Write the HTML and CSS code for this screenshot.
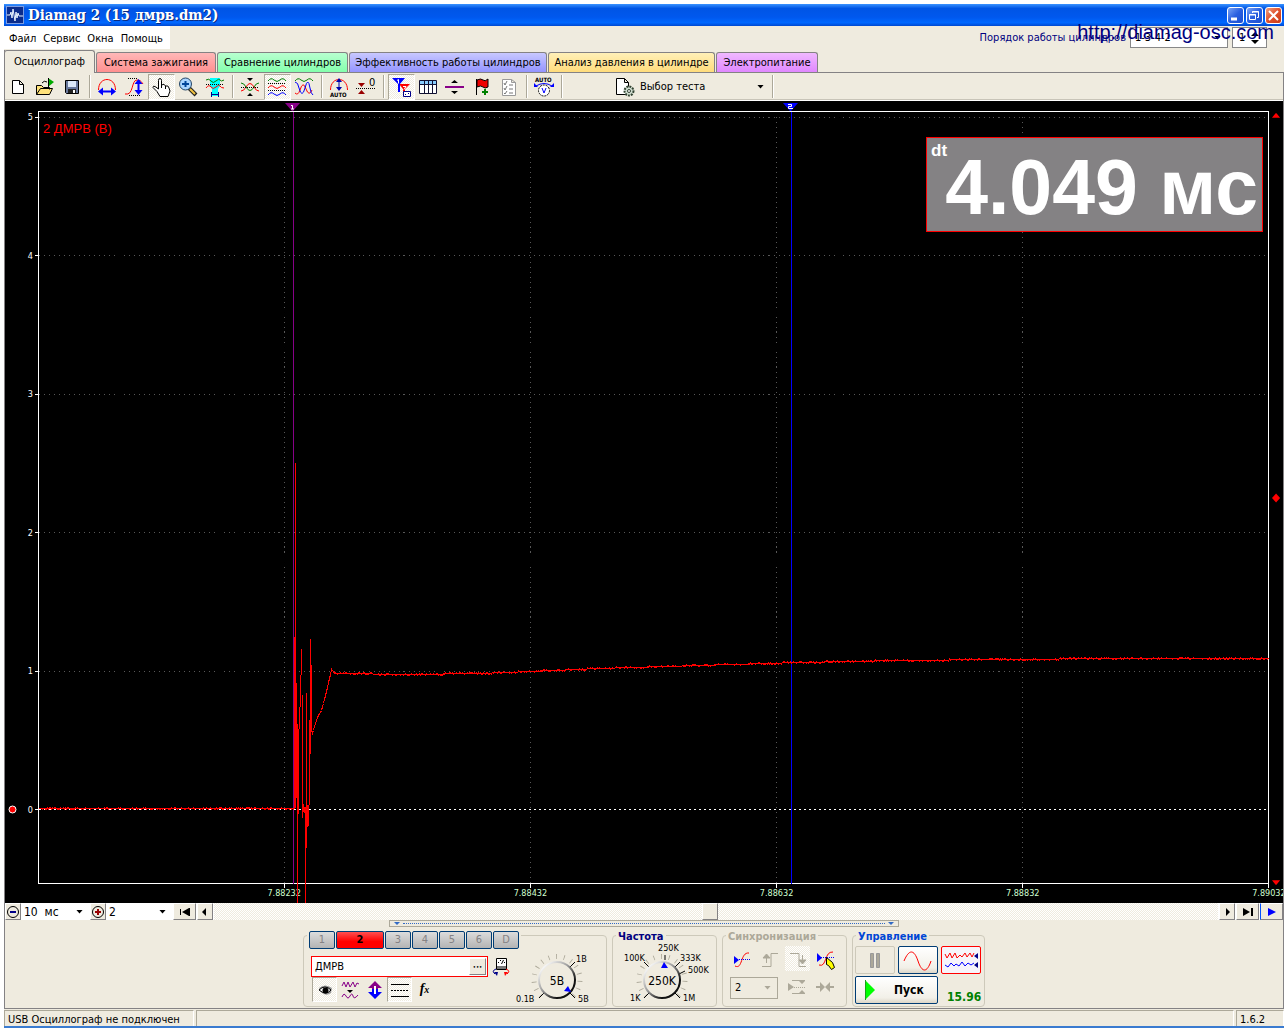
FILE: index.html
```html
<!DOCTYPE html>
<html lang="ru">
<head>
<meta charset="utf-8">
<title>Diamag 2 (15 дмрв.dm2)</title>
<link rel="stylesheet" href="styles.css">
</head>
<body>
<div class="window">
  <header class="titlebar">
    <svg class="logo" viewBox="0 0 18 18"><rect x="0.5" y="0.5" width="17" height="17" fill="#0a2c8c" stroke="#7d9ce0"/><path d="M1 9h3l1-3 1 6 1-9 2 12 1-9 1 6 1-5 1 3h4" fill="none" stroke="#e8f4ff"/></svg>
    <h1>Diamag 2 (15 дмрв.dm2)</h1>
    <button class="win" aria-label="Свернуть"><svg viewBox="0 0 17 17"><path d="M4 12h6" stroke="#fff" stroke-width="3"/></svg></button>
    <button class="win" aria-label="Восстановить"><svg viewBox="0 0 17 17" fill="none" stroke="#fff"><path d="M6.500 6V4.500h6v6H11M6 5h7"/><path d="M3.500 7.500h6v5h-6zM3 8h7"/></svg></button>
    <button class="win close" aria-label="Закрыть"><svg viewBox="0 0 17 17"><path d="M4 4l9 9M13 4l-9 9" stroke="#fff" stroke-width="2"/></svg></button>
  </header>

  <div class="menurow">
    <nav class="menu"><a href="#">Файл</a><a href="#">Сервис</a><a href="#">Окна</a><a href="#">Помощь</a></nav>
    <div class="order">
      <label for="order">Порядок работы цилиндров</label>
      <span class="combo order-list"><select id="order"><option>1-3-4-2</option></select></span>
      <span class="spin"><input type="text" value="1" aria-label="Цилиндр"><svg viewBox="0 0 9 12"><path d="M0 4l4-4 4 4zM0 8l4 4 4-4z"/></svg></span>
    </div>
    <a class="site" href="#">http://diamag-osc.com</a>
  </div>

  <nav class="tabs">
    <button class="tab t1">Осциллограф</button>
    <button class="tab t2">Система зажигания</button>
    <button class="tab t3">Сравнение цилиндров</button>
    <button class="tab t4">Эффективность работы цилиндров</button>
    <button class="tab t5">Анализ давления в цилиндре</button>
    <button class="tab t6">Электропитание</button>
  </nav>

  <main class="page">
    <div class="toolbar">
      <button aria-label="Новый"><svg viewBox="0 0 20 20"><path d="M4.500 3.500h7l4 4v9h-11zM11.500 3.500v4h4" fill="#fff" stroke="#000"/></svg></button>
      <button aria-label="Открыть"><svg viewBox="0 0 20 20"><path d="M1.500 17.500v-9h5l2 2h6v2M1.500 17.500l4-6h12l-3 6z" fill="#ffe27a" stroke="#000"/><path d="M7 6q2-3 5-1" fill="none" stroke="#000"/><path d="M13 1v9l6-5z" fill="#0a0"/><path d="M13.500 1v10" stroke="#000"/></svg></button>
      <button aria-label="Сохранить"><svg viewBox="0 0 20 20"><path d="M3.500 3.500h13v13h-12l-1-1z" fill="#68789c" stroke="#000"/><path d="M6 4h8v6H6z" fill="#dce8f8"/><path d="M6 12h8v4H6z" fill="#222"/><path d="M11 13h2v3h-2z" fill="#fff"/></svg></button>
      <i class="sep"></i>
      <button aria-label="Ширина"><svg viewBox="0 0 20 20" fill="none"><path d="M1.500 13c0-14 17-14 17 0" stroke="red"/><path d="M3 14.500h14" stroke="#00f" stroke-width="2"/><path d="M1 14.500l5-4v8zM19 14.500l-5-4v8z" fill="#00f"/></svg></button>
      <button aria-label="Высота"><svg viewBox="0 0 20 20" fill="none"><path d="M1 17c9 2 6-14 12-14 3 0 4 1 6 4" stroke="red"/><path d="M14.500 4v12" stroke="#00f" stroke-width="2"/><path d="M14.500 2l-4 5h8zM14.500 18l-4-5h8z" fill="#00f"/><path d="M4 1.500h9M5 18.500h12" stroke="#000" stroke-dasharray="1 1"/></svg></button>
      <button class="on" aria-label="Рука"><svg viewBox="0 0 20 20"><path d="M7.500 12V3.500q0-2 1.500-2t1.500 2V8q3-2 4 1 3-1 3.500 2l1 3-2 5.500h-8l-3-5-4-4q0-2 2-1z" fill="#fff" stroke="#000"/><path d="M10.500 8v3M14.500 9v3" stroke="#000"/></svg></button>
      <button aria-label="Лупа"><svg viewBox="0 0 20 20"><path d="M11 11l7 7" stroke="#222" stroke-width="4"/><path d="M12 12l5 5" stroke="#f4c542" stroke-width="2"/><circle cx="7.500" cy="7" r="6" fill="#a9d4ff" stroke="#246"/><path d="M4 7h7M7.500 4v6" stroke="#00449a" stroke-width="2"/></svg></button>
      <button aria-label="Выделение"><svg viewBox="0 0 20 20" fill="none"><path d="M5 1h10v8l-2 3v7H7v-7L5 9z" fill="#0ff"/><path d="M1 3q3-2 5 1t5 0 4-1 4 0" stroke="green"/><path d="M1 7.500h18" stroke="#000" stroke-dasharray="1 1"/><path d="M1 11q3-4 5-1t5 0 4-1 4 2" stroke="red"/><path d="M6 17.500h8M6.500 15v5M13.500 15v5" stroke="#008"/></svg></button>
      <i class="sep"></i>
      <button aria-label="Центрировать"><svg viewBox="0 0 20 20" fill="none"><path d="M1 14q3 0 5-4 4-7 8 0 2 4 5 4" stroke="red"/><path d="M1 6q3 0 5 4 4 7 8 0 2-4 5-4" stroke="green"/><path d="M1 10.500h18" stroke="#000" stroke-dasharray="1 1"/><path d="M7 1h6l-3 3zM7 19h6l-3-3z" fill="#000"/></svg></button>
      <button class="on" aria-label="Раздельно"><svg viewBox="0 0 20 20" fill="none"><path d="M1 4q3-4 6-1t6 0 6 1" stroke="green"/><path d="M1 11q3-4 6-1t6 0 6 1" stroke="red"/><path d="M1 18q3-4 6-1t6 0 6 1" stroke="#00f"/><path d="M1 6.500h18M1 13.500h18" stroke="#000" stroke-dasharray="1 1"/></svg></button>
      <button aria-label="Вместе"><svg viewBox="0 0 20 20" fill="none"><path d="M1 4q3-4 6-1t6 0 6 1" stroke="green"/><path d="M1 16q3 3 5-3 3-10 6-1 3 8 6 1" stroke="red"/><path d="M1 5q3 0 4 6 3 11 6 0 3-12 5 0 1 6 3 7" stroke="#00f"/></svg></button>
      <i class="sep"></i>
      <button aria-label="Авто"><svg viewBox="0 0 20 20" fill="none"><path d="M1.500 13c0-14 17-14 17 0" stroke="red"/><path d="M10 4v8" stroke="#00a"/><path d="M7 5l3-4 3 4zM7 10l3 4 3-4z" fill="#00a"/><text x="1" y="20" class="micro">AUTO</text></svg></button>
      <button aria-label="Ноль"><svg viewBox="0 0 20 20"><path d="M0 11.500h20" stroke="#000" stroke-dasharray="1 1"/><path d="M2 6h7L5.500 10zM2 17h7l-3.500-4z" fill="#900"/><text x="13" y="9" class="zero">0</text></svg></button>
      <i class="sep"></i>
      <button class="on" aria-label="Маркеры"><svg viewBox="0 0 20 20" fill="none"><path d="M8 7h11l-5 5v7h-2v-7z" fill="red"/><path d="M1 1h13L9 7v8H7V7z" fill="#00f"/><path d="M6 3.500l1.500-1v4M12 9.500h3l-2 3" stroke="#fff"/><path d="M12.500 14.500h7v5h-7z" fill="#fff" stroke="#008"/><path d="M14 17.500h1M17 16.500h1" stroke="#008"/></svg></button>
      <button aria-label="Таблица"><svg viewBox="0 0 20 20"><path d="M1.500 3.500h17v13h-17z" fill="#fff" stroke="#113"/><path d="M2 4h16v3H2z" fill="#8cf"/><path d="M2 7.500h16M6.500 4v12M10.500 4v12M14.500 4v12" stroke="#113"/></svg></button>
      <button aria-label="Разделить"><svg viewBox="0 0 20 20"><path d="M0 10h19" stroke="#808" stroke-width="2"/><path d="M6 6h7L9.500 3zM6 14h7l-3.500 3z"/></svg></button>
      <button aria-label="Флаг"><svg viewBox="0 0 20 20"><path d="M4.500 2v16" stroke="#000"/><path d="M5 3q4-2 6 0t5-1v8q-3 2-5 0T5 10z" fill="#e00" stroke="#000"/><path d="M10 15h6M13 12v6" stroke="green" stroke-width="2"/></svg></button>
      <button aria-label="Список"><svg viewBox="0 0 20 20" fill="none"><path d="M3.500 2.500h9l4 3v13h-13zM12.500 2.500v3h4" fill="#fff" stroke="#999"/><path d="M5 6l1 2 2-4M5 11l1 2 2-4M5 16l1 1 2-3M10 8h4M10 12h4M10 16h4" stroke="#777"/></svg></button>
      <i class="sep"></i>
      <button aria-label="Авто вольт"><svg viewBox="0 0 20 20" fill="none"><text x="1" y="5" class="micro">AUTO</text><path d="M2 9q8-5 16 0" stroke="#00f"/><path d="M0 6v4h4zM20 6v4h-4z" fill="#00f"/><circle cx="10" cy="13.500" r="5.500" fill="#fff" stroke="#000" stroke-dasharray="2 1"/><path d="M8 11l2 5 2-5" stroke="#00f"/></svg></button>
      <i class="sep"></i>
      <button class="test"><svg viewBox="0 0 20 20"><path d="M1.500 1.500h8l4 4v12h-12zM9.500 1.500v4h4" fill="#fff" stroke="#000"/><circle cx="14" cy="14" r="4.500" fill="#cfdccf" stroke="#343" stroke-width="2" stroke-dasharray="2 1"/><circle cx="14" cy="14" r="1.500" fill="#fff" stroke="#343"/></svg><span>Выбор теста</span></button>
      <i class="sep"></i>
    </div>

    <section class="scope">
      <div class="yaxis"><span>5</span><span>4</span><span>3</span><span>2</span><span>1</span><span>0</span></div>
      <div class="plot">
        <svg class="graph" viewBox="0 0 1230 772" preserveAspectRatio="none">
          <path class="grid" d="M0 6H1230M0 144H1230M0 283H1230M0 421H1230M0 560H1230M246 5V772M492 5V772M738 5V772M984 5V772"/>
          <path class="ticks" d="M-4 6h4M-4 144h4M-4 283h4M-4 421h4M-4 560h4M-4 698h4M246 772v4M492 772v4M738 772v4M984 772v4M1230 772v4"/>
          <path class="zeroline" d="M0 698H1230"/>
          <path class="cur1" d="M255 0V772"/>
          <path class="cur2" d="M753 0V772"/>
          <path class="trace" id="trace"/>
        </svg>
        <svg class="pin" style="left: 20.7%" viewBox="0 0 15 8"><path d="M0 0h15L8 8H7z" fill="#808"/><path d="M6 2.500h1.500V6M6 6h3" stroke="#fff" fill="none"/></svg>
        <svg class="pin" style="left: 61.2%" viewBox="0 0 15 8"><path d="M0 0h15L8 8H7z" fill="#00f"/><path d="M5 1.500h3.500v2h-3v2H10" stroke="#fff" fill="none"/></svg>
        <span class="channel">2 ДМРВ (В)</span>
        <output class="meter"><small>dt</small>4.049 мс</output>
      </div>
      <svg class="mark" viewBox="0 0 10 10"><path d="M0 7l4-5h1l4 5z"/></svg>
      <svg class="mark mid" viewBox="0 0 10 10"><path d="M0 5l4.500-5L9 5l-4.500 5z"/></svg>
      <svg class="mark low" viewBox="0 0 10 10"><path d="M0 3h9L5 8H4z"/></svg>
      <div class="xaxis"><span>7.88232</span><span>7.88432</span><span>7.88632</span><span>7.88832</span><span>7.89032</span></div>
      <svg class="dot" viewBox="0 0 9 9"><circle cx="4.500" cy="4.500" r="3.500" fill="red" stroke="#fff"/></svg>
    </section>

    <div class="navrow">
      <button class="raised zoomb" aria-label="Меньше"><svg viewBox="0 0 14 14" fill="none"><circle cx="7" cy="7" r="5.500" stroke="#000"/><path d="M4 7h6" stroke="#008" stroke-width="2"/></svg></button>
      <span class="combo scale"><select aria-label="Масштаб времени"><option>10&nbsp; мс</option></select></span>
      <button class="raised zoomb" aria-label="Больше"><svg viewBox="0 0 14 14" fill="none"><circle cx="7" cy="7" r="5.500" stroke="#000"/><path d="M4 7h6M7 4v6" stroke="#900" stroke-width="2"/></svg></button>
      <span class="combo factor"><select aria-label="Множитель"><option>2</option></select></span>
      <button class="raised wide" aria-label="В начало"><svg viewBox="0 0 12 10"><path d="M1 2h1v6H1zM10 1v8L3 5zM10 1h1v8h-1z"/></svg></button>
      <button class="raised step" aria-label="Назад"><svg viewBox="0 0 12 10"><path d="M7 1v8L3 5z"/></svg></button>
      <input type="range" class="scroll" min="0" max="1000" value="494" aria-label="Позиция">
      <button class="raised step" aria-label="Вперёд"><svg viewBox="0 0 12 10"><path d="M5 1v8l4-4z"/></svg></button>
      <button class="raised wide" aria-label="В конец"><svg viewBox="0 0 12 10"><path d="M1 1v8l7-4zM9 1h2v8H9z"/></svg></button>
      <button class="raised wide play" aria-label="Воспроизвести"><svg viewBox="0 0 12 10"><path d="M2 1v8l8-4z" fill="#00f"/></svg></button>
    </div>

    <section class="panel">
      <div class="splitter"><i></i><b></b><i></i></div>
      <div class="groups">
        <fieldset class="g-channel">
          <legend><span class="channels"><button>1</button><button class="active">2</button><button>3</button><button>4</button><button>5</button><button>6</button><button>D</button></span></legend>
          <div class="inner">
            <div class="settings">
              <div class="name"><input type="text" value="ДМРВ" aria-label="Название канала"><button class="raised" aria-label="Выбрать">•••</button></div>
              <div class="tools">
                <button class="on" aria-label="Показать"><svg viewBox="0 0 20 20"><path d="M4 8q6-5 13 0l-1 5q-5 4-10-1z" fill="#999"/><path d="M4 10q6-6 12 0-5 6-12 0z" fill="#fff" stroke="#000"/><circle cx="10.500" cy="10.500" r="3"/></svg></button>
                <button aria-label="Фильтр"><svg viewBox="0 0 20 20" fill="none" stroke="#808"><path d="M2 6l2-4 2 5 2-5 2 5 3-5 2 5 2-4 2 1M2 17q2-5 4-1t4 0 3 0 5-1"/><path d="M7 10h6l-3 3z" fill="#000" stroke="none"/></svg></button>
                <button aria-label="Сдвиг"><svg viewBox="0 0 20 20"><path d="M3 8l7-7 7 7h-4v3H7V8z" fill="#808"/><path d="M3 12l7 7 7-7h-4V9H7v3z" fill="#00f"/><path d="M10 6v8" stroke="#fff" stroke-width="2"/></svg></button>
                <button class="on" aria-label="Линии"><svg viewBox="0 0 20 20"><path d="M1 4.500h18M1 16.500h18" stroke="#000"/><path d="M1 10.500h18" stroke="#000" stroke-dasharray="2 1"/></svg></button>
                <button class="fx" aria-label="Функция">f<small>x</small></button>
              </div>
            </div>
            <button class="probe" aria-label="Датчик"><svg viewBox="0 0 18 20" fill="none"><path d="M4.500 1.500h10v11h-10z" fill="#fff" stroke="#000"/><path d="M5 9h9v3H5z" fill="#777"/><path d="M6 5.500h1M8 3.500h1M12 5.500h1M9.500 7l2-4" stroke="#000"/><path d="M4 12q-5 2-1 5" stroke="#008"/><path d="M2 15h4l-1 4z" fill="#008"/><path d="M14 12q5 2 1 5" stroke="red"/><path d="M12 15h4l-3 4z" fill="red"/></svg></button>
            <svg class="knob" viewBox="0 0 92 64">
              <path class="marks" pathLength="270" d="M27 55A23 23 0 1 1 59 55"/>
              <path d="M56 26l5-5M56 52l5 5M30 52l-5 5" stroke="#000"/>
              <circle cx="43" cy="39" r="18" fill="#efebdf" stroke="url(#rim)" stroke-width="2"/>
              <path d="M57 51l-7-1 4-5z" fill="#00f"/>
              <text x="62" y="21">1В</text><text x="2" y="61">0.1В</text><text x="64" y="61">5В</text><text x="43" y="44" class="val">5В</text>
            </svg>
          </div>
        </fieldset>
        <fieldset class="g-rate">
          <legend>Частота</legend>
          <svg class="knob" viewBox="0 0 102 64">
            <defs><linearGradient id="rim" x1="0" y1="0" x2="1" y2="1"><stop offset="0.100" stop-color="#fff"/><stop offset="0.450" stop-color="#999"/><stop offset="0.750" stop-color="#111"/></linearGradient></defs>
            <path class="marks" pathLength="270" d="M33 57A23 23 0 1 1 65 57"/>
            <path d="M36 28l-5-5M52 21v-5M62 28l5-5M66 35l6-3M62 54l5 5M36 54l-5 5" stroke="#000"/>
            <circle cx="49" cy="41" r="18" fill="#efebdf" stroke="url(#rim)" stroke-width="2"/>
            <path d="M51 23l4 6h-7z" fill="#00f"/>
            <text x="45" y="12">250K</text><text x="11" y="22">100K</text><text x="67" y="22">333K</text><text x="75" y="34">500K</text><text x="17" y="62">1K</text><text x="70" y="62">1M</text><text x="49" y="46" class="val">250K</text>
          </svg>
        </fieldset>
        <fieldset class="g-sync">
          <legend>Синхронизация</legend>
          <div class="tools">
            <button aria-label="Синхронизация"><svg viewBox="0 0 20 20" fill="none"><path d="M3 17c8 4 5-14 14-13" stroke="red"/><path d="M3 10.500h15" stroke="#00f" stroke-dasharray="1 1"/><path d="M2 7v8l5-4z" fill="#00f"/></svg></button>
            <button disabled aria-label="По фронту"><svg viewBox="0 0 20 20" fill="none" stroke="#aca899"><path d="M2 17.500h9V4.500h7M6.500 14V7"/><path d="M3 9l3.500-4L10 9z" fill="#aca899"/></svg></button>
            <button disabled class="check" aria-label="По спаду"><svg viewBox="0 0 20 20" fill="none" stroke="#aca899"><path d="M2 4.500h9v13h7M14.500 6v6"/><path d="M11 11l3.500 4 3.500-4z" fill="#aca899"/></svg></button>
            <button aria-label="Выбор уровня"><svg viewBox="0 0 20 20" fill="none"><path d="M3 16c8 3 5-14 14-13" stroke="red"/><path d="M1 8.500h18" stroke="#00f" stroke-dasharray="1 1"/><path d="M1 4v9l5-4z" fill="#00f"/><path d="M10.500 8.500v7l2 1 3 4 3-2-2-5z" fill="#ff0" stroke="#000"/></svg></button>
          </div>
          <div class="tools">
            <span class="combo sync-ch"><select disabled aria-label="Канал синхронизации"><option>2</option></select></span>
            <button disabled aria-label="Уровень"><svg viewBox="0 0 20 20" fill="#aca899"><path d="M1 5v8l6-4zM5 2h13v1H5zM5 15h13v1H5zM12 3h6l-3 3zM12 15h6l-3-3z"/><path d="M5 9.500h14" stroke="#aca899" stroke-dasharray="1 1"/></svg></button>
            <button disabled aria-label="Сжать"><svg viewBox="0 0 20 20" fill="#aca899"><path d="M1 8h4V4l5 5-5 5v-4H1zM19 8h-4V4l-5 5 5 5v-4h4z"/></svg></button>
          </div>
        </fieldset>
        <fieldset class="g-run">
          <legend>Управление</legend>
          <div class="runs">
            <button class="big" disabled aria-label="Пауза"><svg viewBox="0 0 32 20"><path d="M11.500 3.500h3v14h-3zM17.500 3.500h3v14h-3z" fill="#aca899" stroke="#999"/></svg></button>
            <button class="big xp" aria-label="Один кадр"><svg viewBox="0 0 32 20" fill="none"><path d="M2 11c5-12 10-12 14 0s9 12 13 0" stroke="red"/></svg></button>
            <button class="big xp red" aria-label="Самописец"><svg viewBox="0 0 36 20" fill="none"><path d="M2 4l2 4 3-5 2 5 3-5 2 5 3-3 2 2 3-4 2 4 3-4 2 4 2-4" stroke="red"/><path d="M2 15l3 2 3-4 3 3 2-2 3 2 3-4 3 4 3-3 3 2 3-2" stroke="#00f"/><path d="M35 3v6l-4-3zM35 12v6l-4-3z" fill="#008"/></svg></button>
            <button class="start xp"><svg viewBox="0 0 10 20"><path d="M0 0v20l10-10z" fill="#0f0"/><path d="M0.500 0v20" stroke="#1a9f1a"/></svg><span>Пуск</span></button>
            <output>15.96</output>
          </div>
        </fieldset>
      </div>
    </section>
  </main>

  <footer class="status"><span class="s1">USB Осциллограф не подключен</span><span class="s2"></span><span class="s3">1.6.2</span></footer>
</div>
<script src="script.js"></script>
</body>
</html>
```
FILE: script.js
```js
// Signal trace: coordinates are in the 1230 x 772 space of the graph.
const bursts = [
  [256, 525, 697], [257, 351, 696], [258, 571, 686], [259, 612, 792],
  [260, 617, 702], [261, 595, 617], [262, 563, 595], [263, 537, 563],
  [264, 583, 706], [265, 692, 700], [266, 695, 701], [267, 695, 791],
  [268, 581, 736], [269, 693, 715], [270, 693, 714], [271, 608, 693],
  [272, 527, 642], [273, 553, 618]
];
const curve = [
  [274, 622], [276, 615], [279, 606], [281, 602], [283, 599], [287, 584],
  [291, 567], [293, 558], [296, 561], [300, 562], [370, 563], [440, 562],
  [492, 560], [560, 557], [660, 554], [760, 551], [860, 549], [960, 548],
  [1080, 547], [1230, 547]
];
let seed = 7;
function random() {
  seed = (seed * 1103515245 + 12345) % 2147483648;
  return seed / 2147483648;
}
function level(x) {
  for (let i = 1; i < curve.length; i++) {
    const [x0, y0] = curve[i - 1], [x1, y1] = curve[i];
    if (x <= x1) return y0 + (y1 - y0) * (x - x0) / (x1 - x0);
  }
  return 547;
}
let line = 'M0 697';
let noise = '';
// One sample column: the line itself and, often, a pixel of noise beside it.
function sample(x, y) {
  const r = random();
  line += `L${x} ${y}`;
  if (r < 0.22) noise += `M${x - 1} ${y - 1}h1`;
  if (r > 0.72) noise += `M${x - 1} ${y + 1}h1`;
}
for (let x = 1; x < 256; x++) sample(x, 697);
for (const [x, top, bottom] of bursts) line += `M${x} ${top}V${bottom}`;
line += 'M273 618';
for (let x = 274; x <= 1230; x++) sample(x, Math.round(level(x)));
document.getElementById('trace').setAttribute('d', line + noise);
```
FILE: styles.css
```css
* { box-sizing: border-box; }
body {
  margin: 0;
  padding: 4px;
  min-height: 100vh;
  display: flex;
  background: #fff;
  color: #000;
  font: 11px/12px "DejaVu Sans Condensed", "DejaVu Sans", sans-serif;
}
button, input, select { font: inherit; color: inherit; margin: 0; padding: 0; border: 0; border-radius: 0; background: none; }
a { color: inherit; text-decoration: none; }
svg { display: block; overflow: visible; }
.window { flex: 1; min-width: 0; display: flex; flex-direction: column; background: #efebdf; border-bottom: 2px solid #3a7bd0; }

/* Title bar */
.titlebar { height: 22px; display: flex; align-items: center; gap: 2px; padding: 0 2px; background: linear-gradient(#3a93ff, #0055e5 20%, #0058ee 60%, #0068ff 85%, #0048d0); color: #fff; }
.logo { width: 18px; height: 18px; }
.titlebar h1 { flex: 1; margin: 0; padding-left: 2px; font: bold 15px/20px "DejaVu Serif Condensed", "DejaVu Serif", serif; text-shadow: 1px 1px #0a2a80; }
.win { width: 17px; height: 17px; border: 1px solid #fff; border-radius: 3px; background: linear-gradient(135deg, #7ba4f5, #2a5fe0 50%, #1e4fd0); }
.win svg { width: 17px; height: 17px; margin: -1px; }
.win.close { background: linear-gradient(135deg, #f0a080, #e0512c 50%, #c83a14); }

/* Menu */
.menurow { position: relative; height: 24px; display: flex; justify-content: space-between; align-items: flex-start; }
.menu { height: 23px; display: flex; align-items: center; gap: 7px; padding: 2px 7px 0 5px; background: #fff; }
.order { display: flex; align-items: center; gap: 4px; padding: 1px 17px 0 0; color: #000080; }
.combo { display: inline-flex; position: relative; background: #fff; color: #000; }
.combo::after { content: ""; position: absolute; right: 6px; top: 50%; width: 7px; height: 4px; margin-top: -2px; background: currentColor; clip-path: polygon(0 0, 100% 0, 50% 100%); pointer-events: none; }
.combo select { appearance: none; width: 100%; padding: 0 4px; outline: 0; }
.order-list { width: 98px; height: 21px; border: 1px solid #888; }
.spin { width: 35px; height: 21px; display: flex; align-items: center; padding: 0 6px; background: #fff; border: 1px solid #888; color: #000; }
.spin input { flex: 1; min-width: 0; }
.spin svg { width: 9px; height: 12px; }
.site { position: absolute; right: 10px; top: -5px; color: #000080; font: 20px/22px "Liberation Sans", Arial, sans-serif; }

/* Tabs */
.tabs { height: 22px; display: flex; align-items: flex-end; gap: 1px; border-left: 1px solid #848284; }
.tab { height: 20px; border: 1px solid #848284; border-bottom: 0; border-radius: 3px 3px 0 0; white-space: nowrap; }
.t1 { width: 91px; height: 23px; margin: 0 0 -1px -1px; background: #efebdf; z-index: 1; }
.t2 { width: 120px; background: linear-gradient(#ffb8b8, #ff9090); }
.t3 { width: 131px; background: linear-gradient(#b8ffd0, #84ffac); }
.t4 { width: 198px; background: linear-gradient(#c8c8ff, #9494ff); }
.t5 { width: 167px; background: linear-gradient(#fff0b8, #ffdc7c); }
.t6 { width: 102px; background: linear-gradient(#f0b8ff, #e088ff); }

.page { flex: 1; display: flex; flex-direction: column; border: 1px solid #848284; }

/* Toolbar */
.toolbar { height: 28px; display: flex; align-items: center; border-bottom: 1px solid #fff; box-shadow: inset 0 -1px #c8c4b8; }
.toolbar button { width: 27px; height: 26px; display: grid; place-items: center; padding-right: 2px; }
.toolbar svg { width: 20px; height: 20px; }
.on, .check { background: repeating-conic-gradient(#fff 0 25%, #efebdf 0 50%) 0 0 / 2px 2px; }
.on, .toolbar .on { border: 1px solid #fff; border-top-color: #aca899; border-left-color: #aca899; }
.sep { width: 2px; height: 23px; margin: 0 3px; border-left: 1px solid #aca899; border-right: 1px solid #fff; }
.micro { font: bold 6px "DejaVu Sans Condensed", sans-serif; fill: #000; }
.zero { font: 11px "DejaVu Sans Condensed", sans-serif; }
.toolbar .test { width: 156px; display: flex; align-items: center; gap: 5px; margin-left: 47px; padding: 0 2px; }
.test::after { content: ""; margin-left: auto; margin-right: 3px; width: 7px; height: 4px; background: #000; clip-path: polygon(0 0, 100% 0, 50% 100%); }

/* Oscilloscope */
.scope { flex: 1; display: grid; grid-template: 10px minmax(0, 1fr) 19px / 33px minmax(0, 1fr) 14px; background: #000; overflow: hidden; }
.yaxis { grid-area: 2 / 1; display: flex; flex-direction: column; justify-content: space-between; align-items: flex-end; padding: 0 5px 68px 0; color: #fff; font-size: 9px; }
.plot { grid-area: 2 / 2; position: relative; border: 1px solid #fff; }
.graph { position: absolute; left: -1px; top: -1px; width: calc(100% + 1px); height: calc(100% + 1px); fill: none; shape-rendering: crispEdges; }
.graph path { vector-effect: non-scaling-stroke; transform: translate(0.5px, 0.5px); }
.grid { stroke: #585858; stroke-dasharray: 1 4; }
.ticks { stroke: #fff; }
.zeroline { stroke: #fff; stroke-dasharray: 2 3; }
.cur1 { stroke: #808; }
.cur2 { stroke: #00f; }
.trace { stroke: red; }
.pin { position: absolute; top: -9px; width: 15px; height: 8px; margin-left: -8px; }
.channel { position: absolute; left: 4px; top: 9px; color: red; font: 13px/15px "Liberation Sans", Arial, sans-serif; }
.meter { position: absolute; right: 5px; top: 25px; width: 337px; height: 95px; padding-right: 4px; border: 1px solid red; background: #848284; color: #fff; text-align: right; white-space: nowrap; font: bold 77px/98px "Liberation Sans", Arial, sans-serif; }
.meter small { position: absolute; left: 4px; top: 4px; font-size: 17px; line-height: 18px; }
.mark { grid-area: 2 / 3; width: 9px; height: 10px; margin-left: 3px; fill: red; }
.mid { align-self: center; }
.low { align-self: end; margin-bottom: -3px; }
.xaxis { grid-area: 3 / 2; display: grid; grid-template-columns: repeat(5, 20%); padding-top: 3px; margin-left: 10%; margin-right: -10%; text-align: center; color: #d0ffd0; font-size: 9px; }
.dot { grid-area: 2 / 1; align-self: end; width: 9px; height: 9px; margin: 0 0 70px 3px; }

/* Scroll row */
.navrow { height: 17px; display: flex; gap: 1px; background: #fff; }
.raised { background: #efebdf; border: 1px solid #fff; border-right-color: #848284; border-bottom-color: #848284; }
.navrow .raised { display: grid; place-items: center; }
.zoomb, .step { width: 16px; }
.zoomb svg { width: 14px; height: 14px; }
.step svg, .wide svg { width: 12px; height: 10px; }
.wide { width: 23px; }
.scale { width: 67px; font-size: 12px; }
.factor { width: 65px; font-size: 12px; }
.combo.scale select, .combo.factor select { padding: 0 2px; }
.scroll { appearance: none; flex: 1; min-width: 0; height: 17px; background: repeating-conic-gradient(#fff 0 25%, #efebdf 0 50%) 0 0 / 2px 2px; }
.scroll::-webkit-slider-thumb { appearance: none; width: 16px; height: 17px; background: #efebdf; border: 1px solid #fff; border-right-color: #848284; border-bottom-color: #848284; }
.play { border-left-color: #0050ff; }

/* Control panel */
.splitter { width: 510px; max-width: 100%; height: 7px; margin: 0 auto 4px; padding: 0 4px; display: flex; align-items: center; gap: 3px; border: 1px solid #aca899; }
.splitter i { width: 6px; height: 3px; background: #316ac5; clip-path: polygon(0 0, 100% 0, 50% 100%); }
.splitter b { flex: 1; border-top: 1px dotted #316ac5; }
.groups { display: flex; justify-content: center; gap: 5px; padding-bottom: 1px; }
fieldset { height: 76px; min-width: 0; margin: 0; padding: 0; border: 1px solid #cdc9ba; border-radius: 4px; }
legend { height: 8px; margin-left: 3px; padding: 0 2px; font-weight: bold; color: #000080; }
.g-channel { width: 304px; }
.g-rate { width: 105px; }
.g-sync { width: 125px; }
.g-run { width: 133px; }
.g-sync legend { color: #aca899; }
.g-run legend { color: #0046d5; }
.channels { display: flex; gap: 1px; font-weight: normal; }
.channels button { width: 26px; height: 18px; border: 1px solid #003c74; border-radius: 2px; background: linear-gradient(#dcdcdc, #b4b4b4); color: #848284; }
.channels .active { width: 48px; background: linear-gradient(#ff5050, #f00 60%); color: #000; font-weight: bold; }
.inner { display: flex; align-items: flex-start; padding-left: 7px; }
.settings { width: 177px; padding-top: 17px; }
.name { display: flex; height: 21px; padding: 1px; border: 1px solid red; background: #fff; }
.name input { flex: 1; min-width: 0; padding-left: 2px; }
.name button { width: 17px; font-size: 6px; line-height: 8px; }
.tools { display: flex; align-items: center; }
.tools button { width: 25px; height: 25px; display: grid; place-items: center; }
.tools svg { width: 20px; height: 20px; }
.settings .tools { padding: 0 0 0 1px; }
.tools .fx { display: block; font: italic bold 14px/20px "Liberation Serif", "Times New Roman", serif; }
.fx small { font-size: 10px; }
.probe { margin: 18px 0 0 4px; }
.probe svg { width: 18px; height: 20px; }
.knob { height: 64px; margin-top: 2px; font-size: 9px; fill: #000; }
.g-channel .knob { width: 92px; margin-left: 4px; }
.g-rate .knob { width: 102px; margin-top: 0; }
.knob .val { font-size: 12px; text-anchor: middle; }
.marks { fill: none; stroke: #aca899; stroke-width: 5px; stroke-dasharray: 2 17; }
.g-sync .tools { gap: 3px; padding: 7px 6px 0; }
.g-sync .tools + .tools { padding-top: 4px; }
.sync-ch { width: 48px; height: 22px; border: 1px solid #aca899; background: #efebdf; margin: 0 3px 0 1px; }
.sync-ch::after { background: #aca899; }
.sync-ch select { color: #000; opacity: 1; }
.runs { display: grid; grid-template-columns: 40px 40px 40px; column-gap: 3px; row-gap: 2px; padding: 7px 2px 0; }
.big, .start { height: 28px; display: flex; align-items: center; justify-content: center; border: 1px solid #cdc9ba; border-radius: 2px; }
.big svg { width: 36px; height: 20px; }
.xp { border-color: #003c74; background: linear-gradient(#fff, #f2f0e8 80%, #dcd6c8); }
.red { border-color: red; background: #f6f4fa; }
.start { grid-column: span 2; justify-content: flex-start; padding-left: 9px; gap: 19px; font-weight: bold; font-size: 12px; }
.start svg { width: 10px; height: 20px; }
.runs output { align-self: end; padding: 0 0 1px 6px; color: green; font-weight: bold; font-size: 12px; }

/* Status bar */
.status { height: 17px; display: flex; gap: 2px; padding-top: 1px; }
.status span { padding: 3px 3px 0; border-left: 1px solid #aca899; border-top: 1px solid #aca899; border-right: 1px solid #fff; }
.s1 { width: 190px; }
.s2 { flex: 1; }
.s3 { width: 48px; }
```
